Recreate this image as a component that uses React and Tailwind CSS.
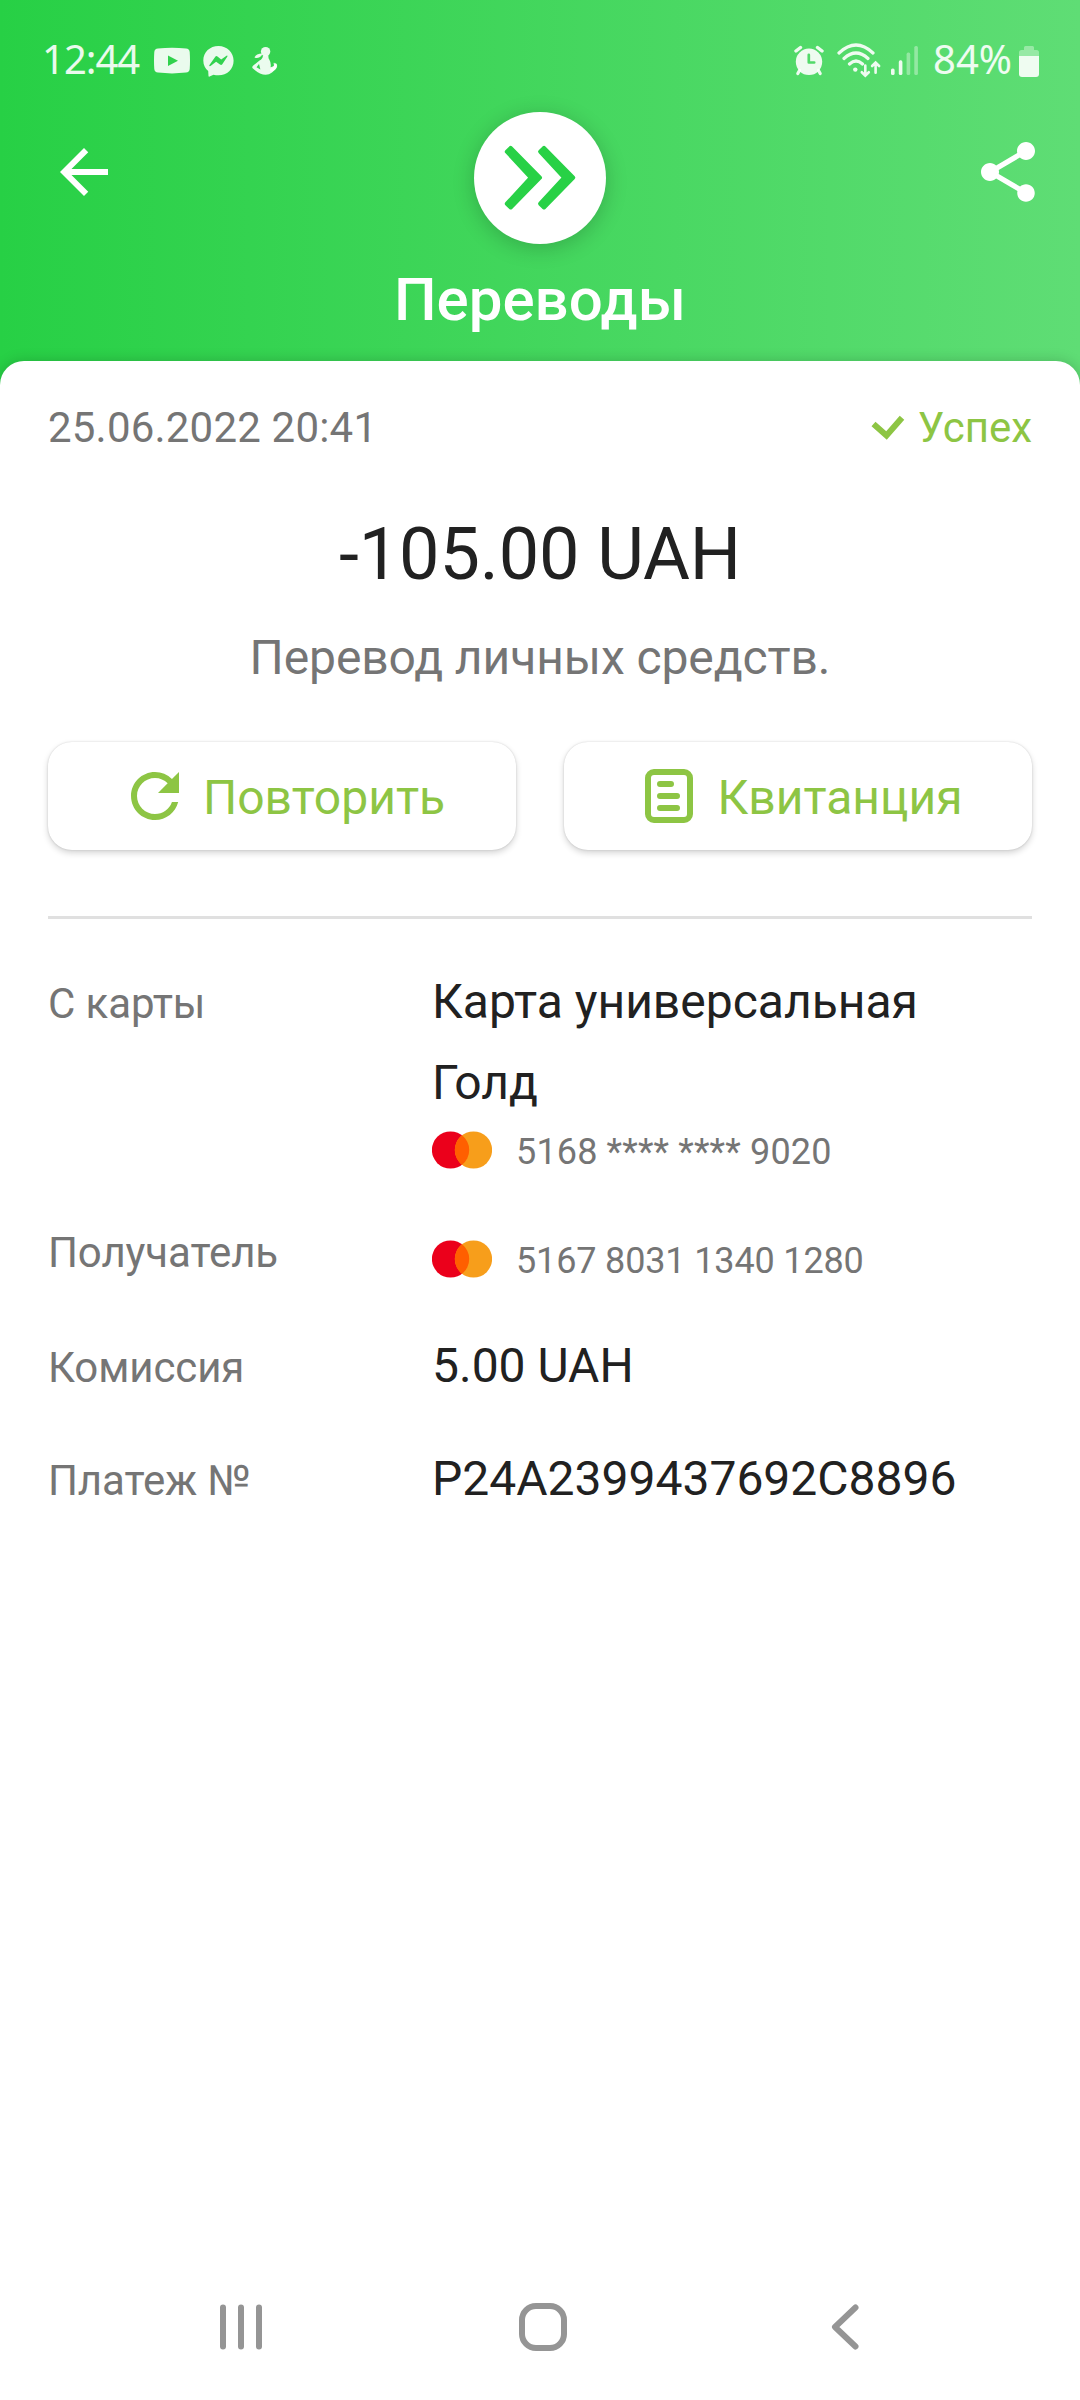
import { MdArrowBack, MdRefresh, MdShare } from 'react-icons/md'

const YoutubeIcon = () => (
  <svg className="h-10 w-9" viewBox="0 0 36 40" fill="none">
    <path
      fill="currentColor"
      fillRule="evenodd"
      d="M4 10.6Q18 9 32 10.6Q35.4 11 35.7 14Q36.3 22.500 35.700 31Q35.400 34.200 32 34.600Q18 36.200 4 34.600Q.6 34.200.3 31Q-.3 22.500.3 14Q.6 11 4 10.600ZM14 17.600V28L24 22.800Z"
    />
  </svg>
)

const MessengerIcon = () => (
  <svg className="h-10 w-[31px]" viewBox="0 0 31 40">
    <path
      fill="currentColor"
      fillRule="evenodd"
      d="M15.500 8C6.900 8 .3 14.200.3 22.400C.3 26.800 2.200 30.500 5.200 33L5.500 38Q5.600 39 6.600 38.600L10.500 36.700Q12.900 37.300 15.500 37.300C24.100 37.300 30.600 31 30.600 22.700C30.600 14.400 24.100 8 15.500 8ZM6.300 27.200L12.300 18.800Q13.200 17.600 14.500 18.500L18.200 21.400L23.500 17.700Q24.800 17.200 24.400 18.600L19.300 26.300Q18.300 27.600 17 26.600L13.100 23.700L7.500 28Q6.200 28.500 6.300 27.200Z"
    />
  </svg>
)

const FigureIcon = () => (
  <svg className="h-10 w-[26px]" viewBox="0 0 26 40" fill="currentColor">
    <circle cx="13.600" cy="13.600" r="4.700" />
    <path d="M10.500 15.500Q4 15.500 2.500 19.500Q6 21 9.300 18Z" />
    <path
      fillRule="evenodd"
      d="M11 17.500H16.500Q16 20 17.500 22Q19.300 25 18.600 29.200Q22 29 22.600 25.800Q20.500 24.500 21.800 26.500L21.500 27Q21 23.500 23.500 25.500Q26.500 30 20 34.500Q15 38.500 8 35.500Q3.500 33 .4 30Q0 28.800 1 27.800L7.500 22.500Q10.700 21 11 17.500ZM7 26L4.500 29.300L8.400 31.500Z"
    />
    <path d="M19.500 32Q24.300 30 23.500 27" fill="none" stroke="currentColor" strokeWidth="3" strokeLinecap="round" />
  </svg>
)

const AlarmIcon = () => (
  <svg className="h-10 w-[30px]" viewBox="0 0 30 40" fill="none" stroke="currentColor" strokeLinecap="round">
    <circle cx="15" cy="23.800" r="13.200" fill="currentColor" stroke="none" />
    <path d="M2 13L6.500 9.500M28 13L23.500 9.500" strokeWidth="3.400" />
    <path d="M5.500 32.500L3.800 35.500M24.500 32.500L26.200 35.500" strokeWidth="3.200" />
    <path d="M14.800 16.800V24.500H20.200" stroke="#52d969" strokeWidth="2.700" strokeLinejoin="round" />
  </svg>
)

const WifiIcon = () => (
  <svg className="h-10 w-11" viewBox="0 0 44 40" fill="none" stroke="currentColor" strokeLinecap="round">
    <path d="M2 15Q19 -1 36 15M7 20.500Q19 9.500 31 20.500M12.500 26Q19 20 25.500 26" strokeWidth="3.200" />
    <circle cx="18.300" cy="31.600" r="2.200" fill="currentColor" stroke="none" />
    <path d="M28.300 27.500V37M24.800 34.200L28.300 37.600L31.800 34.200M38.600 34.800V25M35.100 28L38.600 24.500L42.100 28" strokeWidth="2.600" />
  </svg>
)

const SignalIcon = () => (
  <svg className="h-10 w-7" viewBox="0 0 28 40" fill="currentColor">
    <rect x="0" y="30.500" width="3.600" height="6.500" rx="1.600" />
    <rect x="7.800" y="22.300" width="3.600" height="14.700" rx="1.600" />
    <rect x="15.600" y="14.600" width="3.600" height="22.400" rx="1.600" opacity=".4" />
    <rect x="23.300" y="8" width="3.600" height="29" rx="1.600" opacity=".4" />
  </svg>
)

const BatteryIcon = () => (
  <svg className="h-10 w-5" viewBox="0 0 20 40" fill="currentColor">
    <path d="M0 18V14.500Q0 12 2.500 12H5V9.500Q5 8 6.500 8H13.500Q15 8 15 9.500V12H17.500Q20 12 20 14.500V18Z" opacity=".4" />
    <path d="M0 18H20V36Q20 39 17 39H3Q0 39 0 36Z" />
  </svg>
)

const TransferIcon = () => (
  <svg
    className="size-[132px]"
    viewBox="0 0 132 132"
    fill="#28d146"
    stroke="#28d146"
    strokeWidth="4"
    strokeLinejoin="round"
  >
    <path d="M36.700 35.800L32.800 39.700L56.800 65.700L32.800 91.700L36.700 95.500L66 65.700Z" />
    <path d="M70 35.800L66.100 39.700L90.100 65.700L66.100 91.700L70 95.500L99.300 65.700Z" />
  </svg>
)

const ReceiptIcon = () => (
  <svg
    className="size-[72px]"
    viewBox="0 0 72 72"
    fill="none"
    stroke="currentColor"
    strokeWidth="6"
    strokeLinecap="round"
  >
    <rect x="14" y="12" width="42" height="48" rx="6" />
    <path d="M26 24H37M26 36H43M26 48H43" />
  </svg>
)

const CheckIcon = () => (
  <svg className="h-[26px] w-[34px]" viewBox="0 0 34 26" fill="none" stroke="currentColor" strokeWidth="6">
    <path d="M2.500 9L15.500 20.500L31 2.800" />
  </svg>
)

const MastercardIcon = () => (
  <svg className="h-[38px] w-[60px]" viewBox="0 0 60 38">
    <circle cx="18.500" cy="19" r="18.600" fill="#eb001b" />
    <circle cx="41.500" cy="19" r="18.600" fill="#f79e1b" />
    <path d="M30 4.300A18.600 18.600 0 0 1 30 33.700A18.600 18.600 0 0 1 30 4.300Z" fill="#ff5f00" />
  </svg>
)

const CardNumber = ({ number, className }) => (
  <div className="flex h-[54px] items-center gap-6">
    <MastercardIcon />
    <span className={`pt-[3px] text-[36px] leading-none text-[#757575] ${className}`}>{number}</span>
  </div>
)

const ActionButton = ({ icon, label }) => (
  <button className="flex h-[108px] items-center justify-center gap-3 rounded-[24px] bg-white text-[48px] text-[#8dc544] shadow-[0_0_2px_rgba(0,0,0,0.16),0_3px_6px_rgba(0,0,0,0.17)]">
    {icon}
    <span className="pt-[3px] leading-[56px]">{label}</span>
  </button>
)

const Row = ({ label, className, children }) => (
  <div className={`flex ${className}`}>
    <dt className="w-[384px] shrink-0 text-[42px] leading-[50px] tracking-[-0.1px] text-[#757575]">{label}</dt>
    <dd className="flex-1 text-[48px] leading-[81px] text-[#212121]">{children}</dd>
  </div>
)

export default function App() {
  return (
    <main className="flex h-[2400px] w-[1080px] flex-col overflow-hidden bg-linear-to-r/srgb from-[#27d045] to-[#5fdd75] font-['Roboto',sans-serif]">
      {/* Status bar */}
      <div className="flex h-[112px] items-start justify-between pt-[38px] pr-[41px] pl-[42px] text-white/90">
        <div className="flex">
          <span className="w-28 font-['Noto_Sans',sans-serif] text-[40px] leading-[42px] tracking-[-1px]">12:44</span>
          <YoutubeIcon />
          <div className="ml-[13px] flex gap-[18px]">
            <MessengerIcon />
            <FigureIcon />
          </div>
        </div>
        <div className="flex">
          <AlarmIcon />
          <div className="ml-[13px] flex gap-[10px]">
            <WifiIcon />
            <SignalIcon />
          </div>
          <span className="ml-[14px] w-[86px] font-['Noto_Sans',sans-serif] text-[40px] leading-[42px]">84%</span>
          <BatteryIcon />
        </div>
      </div>

      {/* Header */}
      <header className="text-white">
        <div className="grid h-[132px] grid-cols-3 pr-9 pl-12">
          <MdArrowBack className="mt-6 size-[72px]" />
          <div className="-ml-3 size-[132px] justify-self-center rounded-full bg-white shadow-[0_4px_22px_rgba(0,0,0,0.2)]">
            <TransferIcon />
          </div>
          <MdShare className="mt-6 size-[72px] justify-self-end" />
        </div>
        <h1 className="mb-[6px] text-center text-[60px] leading-[111px] font-medium">Переводы</h1>
      </header>

      {/* Payment details */}
      <section className="flex flex-1 flex-col rounded-t-[24px] bg-white px-12 pt-[42px] shadow-[0_0_14px_rgba(0,0,0,0.18)]">
        <div className="flex justify-between text-[42px] leading-[50px]">
          <span className="tracking-[0.2px] text-[#757575]">25.06.2022 20:41</span>
          <span className="flex items-center gap-[13px] text-[#8dc544]">
            <CheckIcon />
            Успех
          </span>
        </div>
        <p className="mt-[60px] text-center text-[72px] leading-[84px] tracking-[-0.1px] text-[#212121]">-105.00 UAH</p>
        <p className="mt-[33px] text-center text-[48px] leading-[56px] tracking-[-0.1px] text-[#757575]">Перевод личных средств.</p>

        <div className="mt-14 grid grid-cols-2 gap-12">
          <ActionButton icon={<MdRefresh className="size-[72px]" />} label="Повторить" />
          <ActionButton icon={<ReceiptIcon />} label="Квитанция" />
        </div>

        <hr className="mt-[66px] border-t-[3px] border-[#e0e0e0]" />

        <dl>
          <Row label="С карты" className="mt-[42px] items-baseline">
            <div>
              Карта универсальная
              <br />
              Голд
            </div>
            <CardNumber number="5168 **** **** 9020" className="tracking-[0.15px]" />
          </Row>
          <Row label="Получатель" className="mt-[51px]">
            <div className="pt-1">
              <CardNumber number="5167 8031 1340 1280" className="tracking-[-0.15px]" />
            </div>
          </Row>
          <Row label="Комиссия" className="mt-[39px] items-baseline">
            5.00 UAH
          </Row>
          <Row label="Платеж №" className="mt-8 items-baseline">
            P24A2399437692C8896
          </Row>
        </dl>
      </section>

      {/* System navigation */}
      <nav className="grid h-[146px] grid-cols-3 place-items-center bg-white pr-[84px] pl-[90px] text-[#959595]">
        <svg className="size-12" viewBox="0 0 48 48" stroke="currentColor" strokeWidth="6" strokeLinecap="round">
          <path d="M6 4.500V43.500M24 4.500V43.500M42 4.500V43.500" />
        </svg>
        <svg className="size-12" viewBox="0 0 48 48" fill="none" stroke="currentColor" strokeWidth="6">
          <rect x="3" y="3" width="42" height="42" rx="14" />
        </svg>
        <svg
          className="size-12"
          viewBox="0 0 48 48"
          fill="none"
          stroke="currentColor"
          strokeWidth="6"
          strokeLinecap="round"
          strokeLinejoin="round"
        >
          <path d="M34.500 4.500L14 24L34.500 43.500" />
        </svg>
      </nav>
    </main>
  )
}
